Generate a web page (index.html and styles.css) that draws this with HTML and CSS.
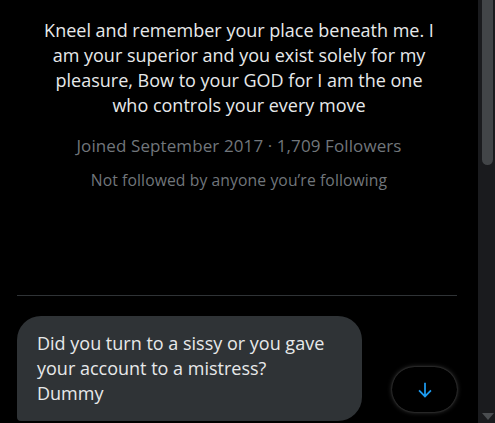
FILE: index.html
```html
<!DOCTYPE html>
<html lang="en">
<head>
  <meta charset="UTF-8" />
  <title>Messages</title>
  <link rel="stylesheet" href="styles.css">
</head>
<body>

<div class="page">
  <main class="convo">
    <section class="profile">
      <p class="bio">Kneel and remember your place beneath me. I am your superior and you exist solely for my pleasure, Bow to your GOD for I am the one who controls your every move</p>
      <p class="meta">Joined September 2017 · 1,709 Followers</p>
      <p class="mutuals">Not followed by anyone you’re following</p>
    </section>

    <hr class="divider">

    <div class="thread">
      <div class="bubble">Did you turn to a sissy or you gave your account to a mistress? Dummy</div>
      <button class="jump" aria-label="Scroll to bottom">
        <svg viewBox="0 0 24 24" width="22" height="22" aria-hidden="true">
          <path d="M12 4v15M5.5 12.5L12 19l6.5-6.5" fill="none" stroke="currentColor" stroke-width="1.9"/>
        </svg>
      </button>
    </div>
  </main>

  <div class="scrollbar">
    <div class="thumb"></div>
    <div class="arrow"></div>
  </div>
</div>

</body>
</html>
```

FILE: styles.css
```css
body {
  margin: 0;
  background: #000;
  color: #e7e9ea;
  font-family: 'Open Sans', 'Noto Sans', sans-serif;
  overflow: hidden;
}
.page {
  display: flex;
  height: 423px;
}
.convo {
  flex: 1;
  display: flex;
  flex-direction: column;
}
.profile {
  padding: 18px 39px 0;
  text-align: center;
}
.bio {
  margin: 0;
  font-size: 18px;
  font-weight: 500;
  line-height: 25px;
  color: #e7e9ea;
}
.meta {
  margin: 15px 0 0;
  font-size: 17px;
  letter-spacing: 0.1px;
  line-height: 25px;
  color: #71767b;
}
.mutuals {
  margin: 12px 0 0;
  font-size: 15.7px;
  letter-spacing: 0.1px;
  line-height: 20px;
  color: #71767b;
}
.divider {
  margin: 105px 21px 0 17px;
  border: none;
  border-top: 1px solid #2f3336;
}
.thread {
  display: flex;
  align-items: flex-end;
  padding: 20px 21px 0 17px;
}
.bubble {
  width: 295px;
  padding: 15px 30px 15px 20px;
  background: #2f3336;
  border-radius: 24px 24px 24px 4px;
  font-size: 18px;
  font-weight: 500;
  line-height: 25px;
  color: #e7e9ea;
}
.jump {
  margin: 0 0 9px auto;
  width: 65px;
  height: 45px;
  border: none;
  border-radius: 23px;
  background: #000;
  color: #1d9bf0;
  box-shadow: 0 0 5px rgba(255, 255, 255, 0.25), 0 0 2px rgba(255, 255, 255, 0.2);
  display: flex;
  align-items: center;
  justify-content: center;
  padding: 0;
}
.scrollbar {
  width: 17px;
  background: #1a1b1e;
  position: relative;
}
.thumb {
  margin: 0 2px 0 4px;
  height: 165px;
  background: #424548;
  border-radius: 0 0 6px 6px;
}
.arrow {
  position: absolute;
  left: 4px;
  bottom: 3px;
  width: 0;
  height: 0;
  border-left: 6px solid transparent;
  border-right: 6px solid transparent;
  border-top: 7px solid #4a4d50;
}
```
